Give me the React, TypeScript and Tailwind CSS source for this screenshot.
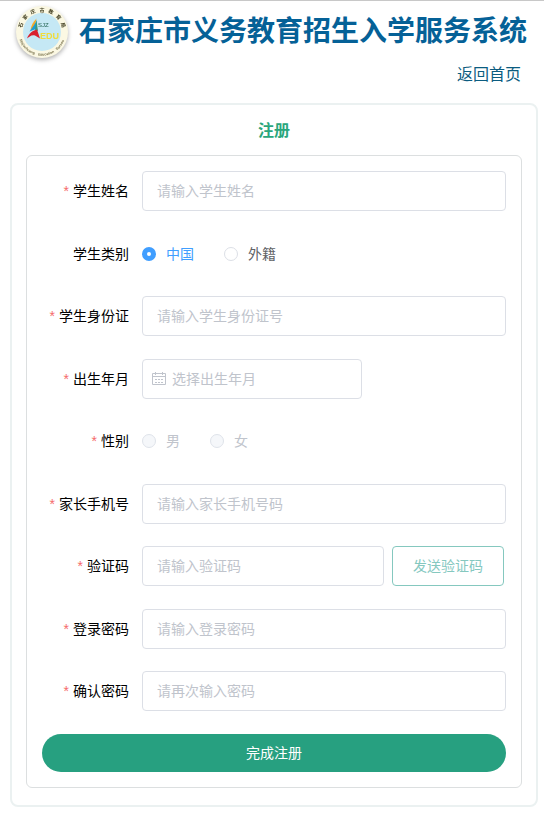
import { useId, useState } from "react";
import type { ReactNode } from "react";

const inputClass =
  "h-10 min-w-0 rounded border border-[#dcdfe6] bg-white text-sm text-[#606266] outline-none placeholder:text-[#c0c4cc] focus:border-[#409eff]";

function Logo() {
  return (
    <svg
      viewBox="0 0 56 56"
      className="h-14 w-14 shrink-0 drop-shadow-[0_2px_2px_rgba(0,0,0,0.3)]"
      role="img"
      aria-label="石家庄市教育局"
    >
      <defs>
        <path id="logo-ring" d="M4.3 28 A23.7 23.7 0 0 0 51.7 28" />
      </defs>
      <circle cx="28" cy="28" r="26" fill="#fbf8e3" />
      <circle cx="28" cy="28" r="19" fill="#c5e8f5" />
      {Array.from("石家庄市教育局").map((char, index) => (
        <text
          key={char}
          x="28"
          y="7.5"
          fontSize="5"
          fontWeight="700"
          fill="#3d3a1c"
          textAnchor="middle"
          transform={`rotate(${(index - 3) * 24} 28 28)`}
        >
          {char}
        </text>
      ))}
      <g fontSize="3.5" fontWeight="700" fill="#77704a" textAnchor="middle">
        <text>
          <textPath href="#logo-ring" startOffset="25%">
            Shijiazhuang
          </textPath>
        </text>
        <text>
          <textPath href="#logo-ring" startOffset="56%">
            Education
          </textPath>
        </text>
        <text>
          <textPath href="#logo-ring" startOffset="80%">
            Bureau
          </textPath>
        </text>
      </g>
      <path d="M22.5 14.5 C19 18 17 22 16.5 26 L21 22 Z" fill="#f5a928" />
      <path d="M23 16 C21 20 18 24 15.5 27.5 L22 25 Z" fill="#1b9dd8" />
      <path d="M22.5 16 L24 27 L21 26 Z" fill="#3f9a7c" />
      <path d="M13 34.5 C15 29 19 26.5 23 25.5 L26 34.5 L21 31.5 C17.5 30.5 15 33 13 34.5 Z" fill="#d8202f" />
      <text x="24" y="23" fontSize="6" fill="#256555">
        SJZ
      </text>
      <text x="26" y="34.5" fontSize="9" fontWeight="700" fill="#f0dc3c">
        EDU
      </text>
    </svg>
  );
}

function CalendarIcon() {
  return (
    <svg viewBox="0 0 14 14" className="h-3.5 w-3.5 shrink-0" fill="none" stroke="#c0c4cc" aria-hidden="true">
      <path d="M0.5 1.5h13v11h-13z M0.5 4.5h13" />
      <path d="M3.5 0v3 M10.5 0v3" />
      <path d="M3 7.5h2 M6 7.5h2 M9 7.5h2 M3 10.5h2 M6 10.5h2 M9 10.5h2" />
    </svg>
  );
}

function Row({
  label,
  htmlFor,
  required = true,
  children,
}: {
  label: string;
  htmlFor?: string;
  required?: boolean;
  children: ReactNode;
}) {
  const text = (
    <>
      {required && <span className="mr-1 text-[#f56c6c]">*</span>}
      {label}
    </>
  );
  const labelClass = "w-[100px] shrink-0 pr-[13px] text-right text-sm text-black";
  return (
    <div className="flex h-10 items-center">
      {htmlFor ? (
        <label htmlFor={htmlFor} className={labelClass}>
          {text}
        </label>
      ) : (
        <span className={labelClass}>{text}</span>
      )}
      {children}
    </div>
  );
}

function TextRow({ label, placeholder, type = "text" }: { label: string; placeholder: string; type?: string }) {
  const id = useId();
  return (
    <Row label={label} htmlFor={id}>
      <input id={id} type={type} placeholder={placeholder} className={`${inputClass} flex-1 px-3.5`} />
    </Row>
  );
}

function Radio({
  name,
  label,
  checked,
  disabled,
  onChange,
}: {
  name: string;
  label: string;
  checked?: boolean;
  disabled?: boolean;
  onChange?: () => void;
}) {
  return (
    <label
      className={`flex items-center gap-2.5 text-sm ${
        disabled ? "text-[#c0c4cc]" : checked ? "text-[#409eff]" : "text-[#606266]"
      }`}
    >
      <input
        type="radio"
        name={name}
        checked={!!checked}
        disabled={disabled}
        onChange={() => onChange?.()}
        className="h-3.5 w-3.5 appearance-none rounded-full border border-[#dcdfe6] bg-white checked:border-[5px] checked:border-[#409eff] disabled:border-[#dfe3ea] disabled:bg-[#f5f7fa]"
      />
      {label}
    </label>
  );
}

export default function App() {
  const [category, setCategory] = useState("中国");

  return (
    <div className="border-t border-[#c8c8c8] bg-white font-['Liberation_Sans','Noto_Sans_CJK_SC',sans-serif]">
      <header>
        <div className="flex h-[62px] items-center gap-[9px] pl-3.5">
          <Logo />
          <h1 className="text-[28px] leading-10 font-bold whitespace-nowrap text-[#056197]">
            石家庄市义务教育招生入学服务系统
          </h1>
        </div>
        <div className="flex justify-end pr-[23px]">
          <a href="#" className="text-base text-[#0b5c80]">
            返回首页
          </a>
        </div>
      </header>

      <main className="mx-1.5 mt-4 ml-2.5 rounded-lg border-2 border-[#ebf1f1] px-3.5 pt-3.5 pb-[17px]">
        <h2 className="text-center text-base font-bold text-[#2aa67c]">注册</h2>
        <form
          className="mt-3 rounded-md border border-[#dcdfe0] p-[15px]"
          onSubmit={(event) => event.preventDefault()}
        >
          <div className="flex min-h-[540px] flex-col justify-between">
            <TextRow label="学生姓名" placeholder="请输入学生姓名" />
            <Row label="学生类别" required={false}>
              <div role="radiogroup" aria-label="学生类别" className="flex gap-[30px]">
                {["中国", "外籍"].map((item) => (
                  <Radio
                    key={item}
                    name="category"
                    label={item}
                    checked={category === item}
                    onChange={() => setCategory(item)}
                  />
                ))}
              </div>
            </Row>
            <TextRow label="学生身份证" placeholder="请输入学生身份证号" />
            <Row label="出生年月" htmlFor="birth">
              <div className="flex h-10 w-[220px] items-center gap-1.5 rounded border border-[#dcdfe6] pl-[9px]">
                <CalendarIcon />
                <input
                  id="birth"
                  type="text"
                  placeholder="选择出生年月"
                  className="h-full min-w-0 flex-1 text-sm text-[#606266] outline-none placeholder:text-[#c0c4cc]"
                />
              </div>
            </Row>
            <Row label="性别">
              <div role="radiogroup" aria-label="性别" className="flex gap-[30px]">
                <Radio name="gender" label="男" disabled />
                <Radio name="gender" label="女" disabled />
              </div>
            </Row>
            <TextRow label="家长手机号" placeholder="请输入家长手机号码" type="tel" />
            <Row label="验证码" htmlFor="code">
              <input id="code" type="text" placeholder="请输入验证码" className={`${inputClass} flex-1 px-3.5`} />
              <button
                type="button"
                className="mr-0.5 ml-2 h-10 w-28 shrink-0 rounded border border-[#85c8bf] bg-white text-sm text-[#85c8bf]"
              >
                发送验证码
              </button>
            </Row>
            <TextRow label="登录密码" placeholder="请输入登录密码" type="password" />
            <TextRow label="确认密码" placeholder="请再次输入密码" type="password" />
          </div>
          <button type="submit" className="mt-[23px] h-[38px] w-full rounded-full bg-[#27a080] text-sm text-white">
            完成注册
          </button>
        </form>
      </main>
    </div>
  );
}
